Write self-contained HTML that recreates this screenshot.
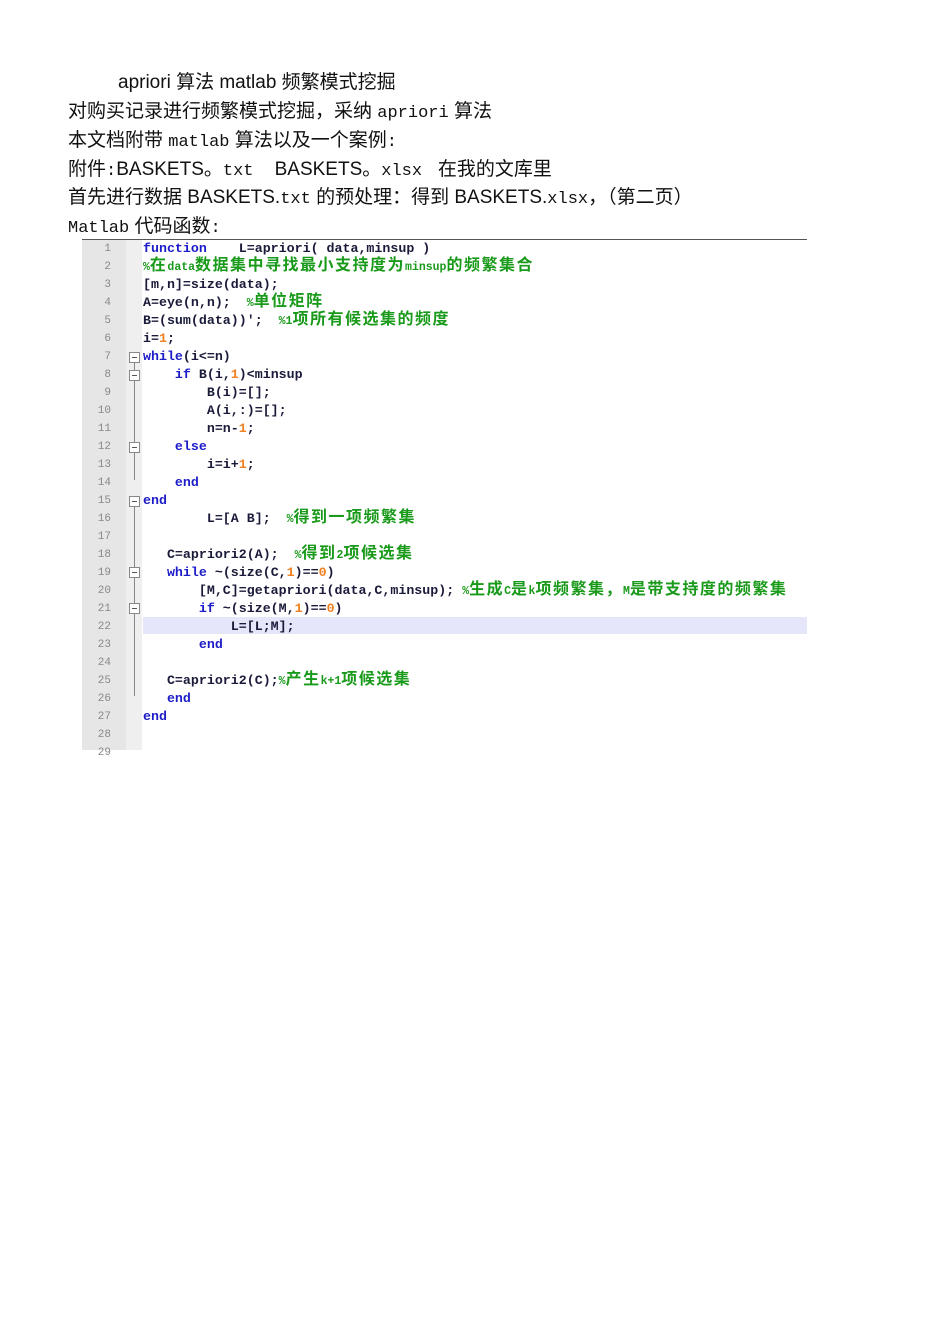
<!DOCTYPE html>
<html><head><meta charset="utf-8"><style>
body{margin:0;width:950px;height:1344px;background:#fff;position:relative;overflow:hidden;font-family:"Liberation Sans","Noto Sans CJK SC",sans-serif;color:#111}
.t{position:absolute;font-size:19px;white-space:nowrap;line-height:22px}
.m{font-family:"Liberation Mono","Noto Sans CJK SC",monospace;font-size:17px}
.code{position:absolute;left:82px;top:240px;width:725px;height:510px;background:#fff}
.g{position:absolute;left:82px;top:240px;width:44px;height:510px;background:#e6e6e6}
.f{position:absolute;left:126px;top:240px;width:16px;height:510px;background:#efefef}
.hl{position:absolute;left:143px;top:617px;width:664px;height:17px;background:#e6e6fa}
.n{position:absolute;width:30px;text-align:right;left:81px;font-family:"Liberation Mono",monospace;font-size:11px;color:#888;line-height:18px}
.c{position:absolute;left:143px;top:240px;font-family:"Liberation Mono","Noto Sans CJK SC",monospace;font-size:13.3px;font-weight:bold;color:#1a1a3a}
.c div{height:18px;line-height:18px;overflow:visible;white-space:pre}
.k{color:#1c1cc8}.cm{color:#1a9a1a;font-weight:bold;font-size:11.5px;line-height:1px}.cm b{font-size:16px;letter-spacing:1.5px;font-weight:bold;font-family:"Noto Sans CJK SC",sans-serif;line-height:1px}.o{color:#f08020}
.box{position:absolute;left:129px;width:9px;height:9px;border:1px solid #888;background:#fff}
.box:after{content:"";position:absolute;left:2px;top:4px;width:5px;height:1px;background:#555}
.vl{position:absolute;left:134px;width:1px;background:#888}
</style></head><body>
<div class="t" style="left:118px;top:72px">apriori 算法 matlab 频繁模式挖掘</div>
<div class="t" style="left:68px;top:101px">对购买记录进行频繁模式挖掘，采纳 <span class="m">apriori</span> 算法</div>
<div class="t" style="left:68px;top:130px">本文档附带 <span class="m">matlab</span> 算法以及一个案例<span class="m">:</span></div>
<div class="t" style="left:68px;top:159px">附件<span class="m">:</span>BASKETS。<span class="m">txt</span>&nbsp;&nbsp;&nbsp;&nbsp;BASKETS。<span class="m">xlsx</span>&nbsp;&nbsp;&nbsp;在我的文库里</div>
<div class="t" style="left:68px;top:187px">首先进行数据 BASKETS.<span class="m">txt</span> 的预处理：得到 BASKETS.<span class="m">xlsx</span>，（第二页）</div>
<div class="t" style="left:68px;top:216px"><span class="m">Matlab</span> 代码函数<span class="m">:</span></div>
<div style="position:absolute;left:82px;top:239px;width:725px;height:1px;background:#555"></div>
<div class="code"></div><div class="g"></div><div class="f"></div><div class="hl"></div>
<div class="vl" style="top:362px;height:118px"></div>
<div class="vl" style="top:506px;height:190px"></div>
<div class="box" style="top:352px"></div><div class="box" style="top:370px"></div><div class="box" style="top:442px"></div><div class="box" style="top:496px"></div><div class="box" style="top:567px"></div><div class="box" style="top:603px"></div>
<div class="n" style="top:240px">1<br>2<br>3<br>4<br>5<br>6<br>7<br>8<br>9<br>10<br>11<br>12<br>13<br>14<br>15<br>16<br>17<br>18<br>19<br>20<br>21<br>22<br>23<br>24<br>25<br>26<br>27<br>28<br>29</div>
<div class="c">
<div><span class="k">function</span>    L=apriori( data,minsup )</div>
<div><span class="cm">%<b>在</b>data<b>数据集中寻找最小支持度为</b>minsup<b>的频繁集合</b></span></div>
<div>[m,n]=size(data);</div>
<div>A=eye(n,n);  <span class="cm">%<b>单位矩阵</b></span></div>
<div>B=(sum(data))';  <span class="cm">%1<b>项所有候选集的频度</b></span></div>
<div>i=<span class="o">1</span>;</div>
<div><span class="k">while</span>(i&lt;=n)</div>
<div>    <span class="k">if</span> B(i,<span class="o">1</span>)&lt;minsup</div>
<div>        B(i)=[];</div>
<div>        A(i,:)=[];</div>
<div>        n=n-<span class="o">1</span>;</div>
<div>    <span class="k">else</span></div>
<div>        i=i+<span class="o">1</span>;</div>
<div>    <span class="k">end</span></div>
<div><span class="k">end</span></div>
<div>        L=[A B];  <span class="cm">%<b>得到一项频繁集</b></span></div>
<div> </div>
<div>   C=apriori2(A);  <span class="cm">%<b>得到</b>2<b>项候选集</b></span></div>
<div>   <span class="k">while</span> ~(size(C,<span class="o">1</span>)==<span class="o">0</span>)</div>
<div>       [M,C]=getapriori(data,C,minsup); <span class="cm">%<b>生成</b>C<b>是</b>k<b>项频繁集，</b>M<b>是带支持度的频繁集</b></span></div>
<div>       <span class="k">if</span> ~(size(M,<span class="o">1</span>)==<span class="o">0</span>)</div>
<div>           L=[L;M];</div>
<div>       <span class="k">end</span></div>
<div> </div>
<div>   C=apriori2(C);<span class="cm">%<b>产生</b>k+1<b>项候选集</b></span></div>
<div>   <span class="k">end</span></div>
<div><span class="k">end</span></div>
</div>
</body></html>
